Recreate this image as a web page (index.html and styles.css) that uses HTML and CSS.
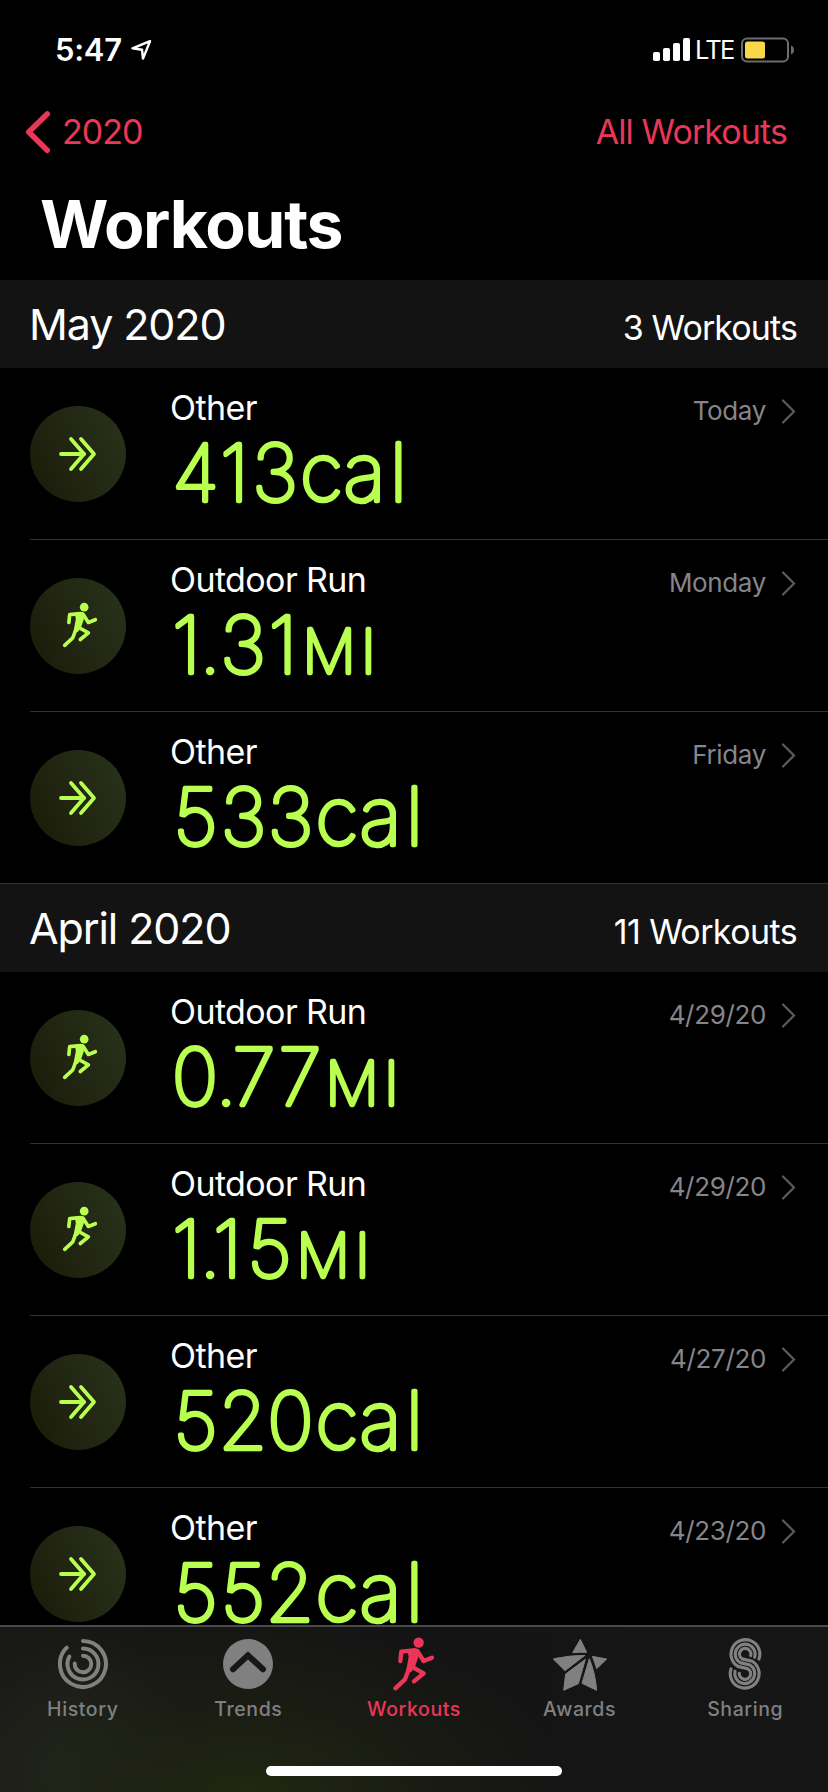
FILE: index.html
```html
<!DOCTYPE html>
<html lang="en">
<head>
<meta charset="utf-8">
<title>Workouts</title>
<link rel="stylesheet" href="styles.css">
</head>
<body>
<svg class="defs" width="0" height="0">
  <symbol id="runner" viewBox="360 75 136 172">
    <circle cx="443" cy="97" r="15.5" fill="currentColor"/>
    <path d="M409 117 L433 114 Q440 114 443 121 L444 134 L431 172 L420 186 L405 184 L413 140Z" fill="currentColor"/>
    <g fill="none" stroke="currentColor" stroke-width="13" stroke-linecap="round" stroke-linejoin="round">
      <path d="M388 152 L391 124 L430 120"/>
      <path d="M439 122 L458 152 L483 142"/>
      <path d="M416 170 L402 207 L373 234"/>
      <path d="M422 169 L458 189 L429 213"/>
    </g>
  </symbol>
  <symbol id="arrows" viewBox="0 0 96 96">
    <g fill="none" stroke="currentColor" stroke-width="3.8" stroke-linecap="round" stroke-linejoin="round">
      <path d="M31 48H54"/>
      <path d="M41 33L54 48L41 63"/>
      <path d="M51 33L64 48L51 63"/>
    </g>
  </symbol>
  <symbol id="chevron" viewBox="0 0 15 25">
    <path d="M2 1.5L13 12.5L2 23.5" fill="none" stroke="currentColor" stroke-width="2.2" stroke-linecap="round"/>
  </symbol>
</svg>
<div class="screen">
  <div class="status">
    <span class="time">5:47</span>
    <svg class="location" width="24" height="22" viewBox="130 39 24 22"><path d="M150 41.2L132.5 48.3L142 49.7L143 58.6Z" fill="none" stroke="#fff" stroke-width="2.4" stroke-linejoin="round"/></svg>
    <svg class="signal" width="37" height="23" viewBox="0 0 37 23" fill="#fff"><rect y="14" width="7" height="9" rx="1.8"/><rect x="10" y="10" width="7" height="13" rx="1.8"/><rect x="20" y="5" width="7" height="18" rx="1.8"/><rect x="30" y="0" width="7" height="23" rx="1.8"/></svg>
    <span class="lte">LTE</span>
    <svg class="battery" width="54" height="26" viewBox="741 36.5 54 26"><rect x="742" y="38" width="46" height="23" rx="5" fill="none" stroke="#6c6c6c" stroke-width="2"/><rect x="745" y="41" width="20" height="17" rx="2.5" fill="#f8d74a"/><path d="M791 45q3 1 3 4.5t-3 4.5z" fill="#6c6c6c"/></svg>
  </div>
  <div class="nav">
    <a class="back"><svg width="26" height="44" viewBox="25 110 26 44"><path d="M47.2 114L28.8 132L47.2 150.3" fill="none" stroke="currentColor" stroke-width="5.6" stroke-linecap="round" stroke-linejoin="round"/></svg><span>2020</span></a>
    <a class="all">All Workouts</a>
  </div>
  <h1 class="title">Workouts</h1>
  <div class="list">
    <div class="month"><span class="name may">May 2020</span><span class="count few">3 Workouts</span></div>
    <div class="row">
      <div class="badge"><svg class="arrows"><use href="#arrows"/></svg></div>
      <div class="info"><div class="kind">Other</div>
        <svg class="value" width="300" height="92"><text y="73.4" x="25.5 64.5 105 151.5 194.5 228.5">413<tspan class="cal">cal</tspan></text></svg></div>
      <span class="date">Today</span><svg class="chev"><use href="#chevron"/></svg>
    </div>
    <div class="row">
      <div class="badge"><svg class="run"><use href="#runner"/></svg></div>
      <div class="info"><div class="kind">Outdoor Run</div>
        <svg class="value" width="300" height="92"><text y="73.4" x="16.5 40 73 113 159 198.5">1.31<tspan class="mi">MI</tspan></text></svg></div>
      <span class="date">Monday</span><svg class="chev"><use href="#chevron"/></svg>
    </div>
    <div class="row last">
      <div class="badge"><svg class="arrows"><use href="#arrows"/></svg></div>
      <div class="info"><div class="kind">Other</div>
        <svg class="value" width="300" height="92"><text y="73.4" x="25.5 73.5 120.5 167 210.5 244.5">533<tspan class="cal">cal</tspan></text></svg></div>
      <span class="date">Friday</span><svg class="chev"><use href="#chevron"/></svg>
    </div>
    <div class="month"><span class="name">April 2020</span><span class="count">11 Workouts</span></div>
    <div class="row">
      <div class="badge"><svg class="run"><use href="#runner"/></svg></div>
      <div class="info"><div class="kind">Outdoor Run</div>
        <svg class="value" width="300" height="92"><text y="73.4" x="25 56 84 130 182 221.5">0.77<tspan class="mi">MI</tspan></text></svg></div>
      <span class="date">4/29/20</span><svg class="chev"><use href="#chevron"/></svg>
    </div>
    <div class="row">
      <div class="badge"><svg class="run"><use href="#runner"/></svg></div>
      <div class="info"><div class="kind">Outdoor Run</div>
        <svg class="value" width="300" height="92"><text y="73.4" x="16.5 40 57.5 99.5 153 192.5">1.15<tspan class="mi">MI</tspan></text></svg></div>
      <span class="date">4/29/20</span><svg class="chev"><use href="#chevron"/></svg>
    </div>
    <div class="row">
      <div class="badge"><svg class="arrows"><use href="#arrows"/></svg></div>
      <div class="info"><div class="kind">Other</div>
        <svg class="value" width="300" height="92"><text y="73.4" x="25.5 73 120.5 167 210.5 244.5">520<tspan class="cal">cal</tspan></text></svg></div>
      <span class="date">4/27/20</span><svg class="chev"><use href="#chevron"/></svg>
    </div>
    <div class="row">
      <div class="badge"><svg class="arrows"><use href="#arrows"/></svg></div>
      <div class="info"><div class="kind">Other</div>
        <svg class="value" width="300" height="92"><text y="73.4" x="25.5 73 120 167 210.5 244.5">552<tspan class="cal">cal</tspan></text></svg></div>
      <span class="date">4/23/20</span><svg class="chev"><use href="#chevron"/></svg>
    </div>
  </div>
  <div class="tabbar">
    <div class="tabs">
      <div class="tab"><svg width="50" height="60" viewBox="0 -5 50 60" fill="none" stroke="currentColor" stroke-width="4" stroke-linecap="round"><path d="M25 2A23 23 0 1 1 8.7 8.7"/><path d="M25 9.5A15.5 15.5 0 1 1 11.4 17.5"/><path d="M25 16.7A8.3 8.3 0 1 1 16.7 24.5"/></svg><span>History</span></div>
      <div class="tab"><svg width="50" height="60" viewBox="0 -5 50 60"><circle cx="25" cy="25" r="25" fill="currentColor"/><path d="M10 30.3L25 16.4L40 30.3" fill="none" stroke="#171815" stroke-width="6" stroke-linecap="round"/></svg><span>Trends</span></div>
      <div class="tab active"><svg width="45.3" height="57.3"><use href="#runner"/></svg><span>Workouts</span></div>
      <div class="tab"><svg width="56" height="60" viewBox="30 72 168 180" fill="currentColor" stroke="currentColor" stroke-width="3" stroke-linejoin="round"><path d="M115 88L134 127Q112 126 92 128Z"/><path d="M34 147Q80 136 129 136L69 182Z"/><path d="M71 192L130 148L109 221L65 241Z"/><path d="M142 146Q160 190 164 241L120 220Z"/><path d="M151 139L194 147L164 176Q158 156 151 139Z"/></svg><span>Awards</span></div>
      <div class="tab"><svg width="34" height="60" viewBox="564 72 102 180" fill="none" stroke="currentColor" stroke-width="9.5" stroke-linecap="round"><path d="M657 147A43.3 43.3 0 1 0 593.5 169.2L623.5 176.3A17 17 0 1 1 598 190"/><path d="M644 142A30 30 0 1 0 600 158L630 165A30 30 0 1 1 585 184"/><path d="M632 137A17 17 0 1 0 606.5 146.7L636.5 153.8A43.3 43.3 0 1 1 573 177"/></svg><span>Sharing</span></div>
    </div>
    <div class="home"></div>
  </div>
</div>
</body>
</html>
```
FILE: styles.css
```css
* { box-sizing: border-box; }
body { margin: 0; background: #000; color: #fff; font-family: Inter, "Liberation Sans", sans-serif; }
.defs { display: block; position: absolute; }
.screen { width: 828px; height: 1792px; display: flex; flex-direction: column; overflow: hidden; }
.status { height: 96px; padding: 30px 33px 0 55px; display: flex; align-items: flex-start; flex: none; }
.time { font-size: 31px; font-weight: 600; line-height: 40px; width: 75px; white-space: nowrap; letter-spacing: -0.3px; }
.location { margin-top: 9px; }
.signal { margin: 8px 0 0 499px; }
.lte { width: 51px; padding-left: 5px; font-size: 25.5px; line-height: 40px; letter-spacing: -1.7px; white-space: nowrap; }
.battery { margin-top: 6.5px; }
.nav { height: 84px; flex: none; display: flex; justify-content: space-between; align-items: flex-start; color: #ec3658; font-size: 34px; line-height: 40px; padding: 16px 41px 0 25px; }
.back { display: flex; align-items: flex-start; gap: 11px; letter-spacing: -1px; }
.back svg { margin-top: -2px; }
.all { letter-spacing: -0.9px; }
.back span, .all { display: block; }
.title { margin: 0; height: 100px; flex: none; padding-left: 40px; font-size: 66px; line-height: 88px; font-weight: 700; letter-spacing: -1.3px; }
.list { flex: 1; min-height: 0; overflow: hidden; }
.month { height: 88px; background: #131313; display: flex; justify-content: space-between; align-items: baseline; padding: 17px 31px 0 29px; }
.name { font-size: 43px; line-height: 54px; letter-spacing: -1.1px; }
.count { font-size: 34px; letter-spacing: -0.6px; }
.few { letter-spacing: -0.9px; }
.row { height: 172px; display: flex; align-items: flex-start; padding: 20px 32px 0 30px; position: relative; }
.row::after { content: ""; position: absolute; left: 30px; right: 0; bottom: 0; height: 1px; background: #323234; }
.row.last::after { left: 0; }
.badge { width: 96px; height: 96px; border-radius: 50%; margin-top: 18px; background: linear-gradient(65deg, #191a06, #222713 50%, #28331a); color: #b9ff50; display: flex; align-items: center; justify-content: center; flex: none; }
.arrows { width: 96px; height: 96px; }
.run { width: 38px; height: 48px; margin: -2px 0 0 3px; }
.info { margin-left: 44px; flex: 1; }
.kind { font-size: 34px; line-height: 40px; letter-spacing: -0.6px; }
.value { display: block; overflow: visible; fill: #b9ff50; stroke: #b9ff50; stroke-width: 4.4px; stroke-linejoin: round; font-size: 78.5px; font-weight: 100; text-anchor: middle; }
.cal { font-size: 80px; }
.mi { font-size: 59.5px; }
.date { color: #86858b; font-size: 26px; line-height: 40px; margin-top: 3px; letter-spacing: -0.35px; }
.chev { width: 15px; height: 25px; margin: 11px 0 0 15px; color: #5b5b5f; }
.tabbar { height: 167px; flex: none; border-top: 2px solid #4a494b; background: radial-gradient(ellipse 320px 180px at 250px 175px, #222811, rgba(30,34,18,0.6) 50%, rgba(20,20,20,0)), radial-gradient(ellipse 130px 150px at 70px 150px, #23261f, rgba(28,28,24,0)), linear-gradient(90deg, #181816, #141414 50%, #161616); }
.tabs { display: grid; grid-template-columns: repeat(5, 1fr); height: 139px; padding-top: 7px; }
.tab { display: flex; flex-direction: column; align-items: center; color: #808080; font-size: 19.5px; line-height: 26px; font-weight: 450; letter-spacing: 0.6px; }
.tab svg { height: 60px; margin-bottom: 2px; }
.active { color: #ec3658; }
.home { width: 296px; height: 10px; border-radius: 5px; background: #fff; margin: 0 auto; }
```
